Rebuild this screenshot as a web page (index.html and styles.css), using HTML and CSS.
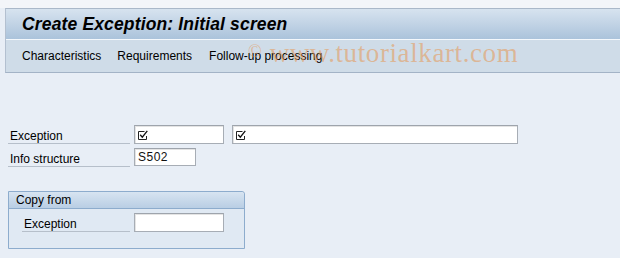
FILE: index.html
```html
<!DOCTYPE html>
<html>
<head>
<meta charset="utf-8">
<link rel="stylesheet" href="styles.css">
</head>
<body>
<div class="top"></div>
<div class="window">
  <div class="titlebar"><h1 class="title">Create Exception: Initial screen</h1></div>
  <div class="menubar">
    <span class="menu-item">Characteristics</span>
    <span class="menu-item">Requirements</span>
    <span class="menu-item">Follow-up processing</span>
  </div>
</div>
<div class="watermark"><span class="copy">©</span> www.tutorialkart.com</div>
<div class="content">
  <div class="row">
    <div class="label">Exception</div>
    <div class="input w90"><svg class="check" width="11" height="10" viewBox="0 0 11 10"><path d="M0.5 1.5H6.5M0.5 1.5V9.5H8.5V6" fill="none" stroke="#222" stroke-width="1"/><path d="M2.2 4.8L4.3 7.2L9.3 0.8" fill="none" stroke="#111" stroke-width="1.3"/></svg></div>
    <div class="input w286"><svg class="check" width="11" height="10" viewBox="0 0 11 10"><path d="M0.5 1.5H6.5M0.5 1.5V9.5H8.5V6" fill="none" stroke="#222" stroke-width="1"/><path d="M2.2 4.8L4.3 7.2L9.3 0.8" fill="none" stroke="#111" stroke-width="1.3"/></svg></div>
  </div>
  <div class="row">
    <div class="label">Info structure</div>
    <div class="input w62"><span class="val">S502</span></div>
  </div>
  <div class="group">
    <div class="group-head">Copy from</div>
    <div class="group-body">
      <div class="row">
        <div class="label inner">Exception</div>
        <div class="input w90"></div>
      </div>
    </div>
  </div>
</div>
</body>
</html>
```
FILE: styles.css
```css
html, body {
  margin: 0;
  padding: 0;
}
body {
  width: 620px;
  height: 258px;
  background: #e8eef6;
  font-family: "Liberation Sans", sans-serif;
  font-size: 12px;
  color: #000;
  position: relative;
  overflow: hidden;
}
.top {
  height: 8px;
  background: #f3f5f9;
}
.window {
  margin-left: 5px;
  border-left: 1px solid #b3c0d0;
  border-top: 1px solid #aab8c9;
  border-bottom: 1px solid #a3b3c6;
}
.titlebar {
  height: 30px;
  background: linear-gradient(#d7e3ef, #abc3db);
  border-bottom: 1px solid #f4f8fc;
  display: flex;
  align-items: center;
}
.title {
  margin: 0 0 0 16px;
  font-family: "Liberation Sans", sans-serif;
  font-size: 17.5px;
  font-weight: bold;
  font-style: italic;
  color: #000;
  letter-spacing: 0.15px;
}
.menubar {
  height: 32px;
  background: #cfdce8;
  display: flex;
  align-items: center;
  padding-left: 16px;
  gap: 16px;
  font-size: 12px;
}
.menu-item:last-child {
  margin-left: 1px;
}
.watermark {
  position: absolute;
  left: 248px;
  top: 38px;
  font-family: "Liberation Serif", serif;
  font-size: 27px;
  color: rgba(230, 150, 80, 0.55);
  white-space: nowrap;
  letter-spacing: 0.6px;
}
.copy {
  font-size: 18px;
  vertical-align: 5px;
}
.content {
  padding: 52px 0 0 8px;
}
.row {
  display: flex;
  align-items: stretch;
  height: 19px;
  margin-bottom: 4px;
  gap: 4px;
}
.label {
  width: 122px;
  padding: 2px 0 0 2px;
  border-bottom: 1px solid #b6bfca;
  line-height: 18px;
  box-sizing: border-box;
}
.input {
  box-sizing: border-box;
  background: #fff;
  border: 1px solid #a7adb5;
  border-top-color: #9ea4ac;
  box-shadow: inset 1px 1px 0 #e4e4e4;
  display: flex;
  align-items: center;
  padding-left: 3px;
  height: 19px;
}
.w90 { width: 90px; }
.w286 { width: 286px; margin-left: 4px; }
.w62 { width: 62px; height: 18px; }
.val {
  font-size: 12px;
  color: #111;
  letter-spacing: 0.5px;
}
.check {
  display: block;
}
.group {
  margin-top: 24px;
  width: 237px;
  height: 58px;
  box-sizing: border-box;
  border: 1px solid #8daccd;
  border-radius: 0 3px 0 0;
  background: #e0e9f3;
}
.group-head {
  height: 16px;
  line-height: 16px;
  background: linear-gradient(#d7e4f1, #b9cee4);
  border-bottom: 1px solid #8daccd;
  padding-left: 7px;
  border-radius: 0 3px 0 0;
}
.group-body {
  padding: 4px 0 0 13px;
}
.label.inner {
  width: 108px;
}
```
